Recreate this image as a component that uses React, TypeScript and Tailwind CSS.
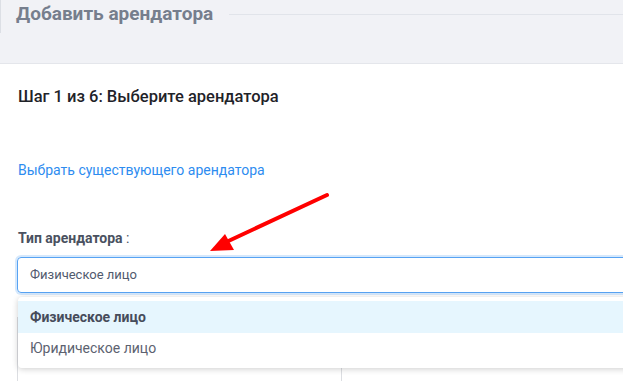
import React from "react";

const options = ["Физическое лицо", "Юридическое лицо"];

function Arrow() {
  return (
    <svg
      className="pointer-events-none absolute left-0 top-0"
      width="623"
      height="381"
      viewBox="0 0 623 381"
    >
      <line x1="327" y1="195" x2="222" y2="244" stroke="#ff0000" strokeWidth="4" strokeLinecap="round" />
      <polygon points="210,251 225,234 234,250" fill="#ff0000" />
    </svg>
  );
}

export default function App() {
  const selected = 0;

  return (
    <div
      className="relative h-[381px] w-[623px] overflow-hidden bg-white text-[#515a6e]"
      style={{ fontFamily: "Roboto, 'Liberation Sans', sans-serif" }}
    >
      {/* page header */}
      <div className="h-[64px] border-b border-[#e4e6eb] bg-[#f1f2f6]">
        <div className="flex h-[33px] items-start border-l border-[#dcdfe5] pl-[15px]">
          <h1 className="mt-[2px] text-[19px] font-bold leading-[24px] text-[#767e8d]">
            Добавить арендатора
          </h1>
          <div className="mt-[14px] ml-[16px] h-px flex-1 bg-[#e1e4ea]" />
        </div>
      </div>

      {/* form body */}
      <div className="w-[660px] pl-[18px] pt-[22px]">
        <h2 className="text-[16.5px] font-medium leading-[22px] text-[#1f2329]">
          Шаг 1 из 6: Выберите арендатора
        </h2>

        <a className="mt-[52px] block text-[14px] leading-[20px] text-[#2d8cf0]">
          Выбрать существующего арендатора
        </a>

        <label className="mt-[48px] block text-[14px] font-bold leading-[20px] text-[#4a5160]">
          Тип арендатора <span className="font-normal">:</span>
        </label>

        <div className="relative mt-[9px] -ml-px">
          <div className="flex h-[36px] items-center rounded-[4px] border border-[#57a3f3] pl-[12px] text-[13px] shadow-[0_0_0_2px_rgba(45,140,240,0.2)]">
            Физическое лицо
          </div>

          <div className="grid grid-cols-[325px_1fr] pt-[24px]">
            <div className="h-[70px] border-x border-[#dcdee2]" />
            <div className="h-[70px]" />
          </div>

          {/* open dropdown */}
          <div className="absolute left-px right-0 top-[40px] rounded-[4px] bg-white py-[4px] shadow-[0_1px_6px_rgba(0,0,0,0.2)]">
            {options.map((o, i) => (
              <div
                key={o}
                className={
                  i === selected
                    ? "flex h-[32px] items-center bg-[#e6f6fe] pl-[12px] text-[14px] font-bold text-[#464c5b]"
                    : "flex h-[31px] items-center pl-[12px] text-[14px] text-[#5c6270]"
                }
              >
                {o}
              </div>
            ))}
          </div>
        </div>
      </div>

      <Arrow />
    </div>
  );
}
